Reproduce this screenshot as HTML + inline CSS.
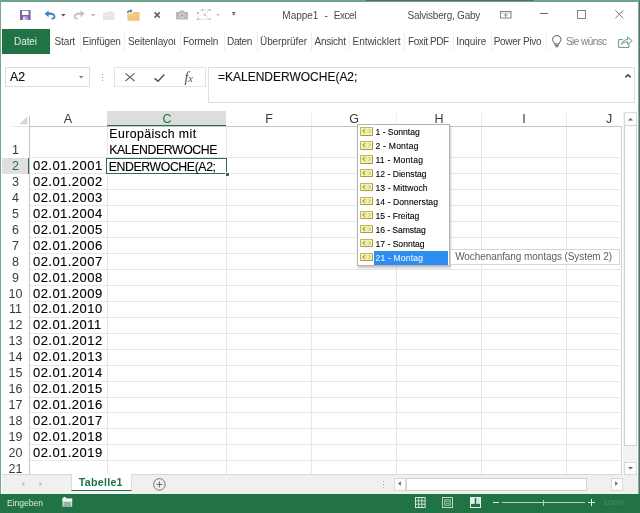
<!DOCTYPE html>
<html>
<head>
<meta charset="utf-8">
<style>
html,body{margin:0;padding:0;}
body{width:640px;height:513px;overflow:hidden;background:#fff;font-family:"Liberation Sans",sans-serif;position:relative;color:#262626;}
.a{position:absolute;}
.t{position:absolute;white-space:nowrap;line-height:1;}
.tab{font-size:10px;top:36.5px;color:#444;}
.sep{position:absolute;top:32px;width:1px;height:19px;background:#efefef;}
.ch{position:absolute;top:112.5px;font-size:12.5px;line-height:13px;color:#3a3a3a;white-space:nowrap;transform:translateX(-50%);}
.vl{position:absolute;top:127px;width:1px;height:347px;background:#e7e7e7;}
.hl{position:absolute;left:30px;width:592px;height:1px;background:#e7e7e7;}
.rn{position:absolute;left:2px;width:27px;text-align:center;font-size:12.5px;line-height:16px;color:#3a3a3a;}
.d{position:absolute;left:33px;font-size:13px;letter-spacing:0.45px;line-height:16px;color:#000;white-space:nowrap;-webkit-text-stroke:0.12px #000;}
.li{position:absolute;left:358px;width:90px;height:14px;}
.ic{position:absolute;left:2.4px;top:1.4px;width:10.6px;height:6.8px;background:#f3ee9f;border:1px solid #a39c4e;border-top-color:#bdb566;border-left-color:#bdb566;border-radius:1.2px;box-shadow:inset 0 0 0 0.8px #f7f4c0;}
.ic:before{content:"";position:absolute;left:1.6px;top:1.6px;width:2.6px;height:2.6px;border-left:1px solid #8c8748;border-bottom:1px solid #8c8748;transform:rotate(45deg) scale(0.8,0.8);}
.ic:after{content:"";position:absolute;right:1.6px;top:1.6px;width:2.6px;height:2.6px;border-right:1px solid #c9c27c;border-top:1px solid #c9c27c;transform:rotate(45deg) scale(0.8,0.8);}
.tx{position:absolute;left:17.5px;top:0;font-size:8.6px;line-height:14px;color:#000;-webkit-text-stroke:0.1px #000;white-space:nowrap;}
svg{position:absolute;overflow:visible;}
#w{position:absolute;left:0;top:0;width:640px;height:513px;overflow:hidden;background:#fff;filter:blur(0.4px);}
</style>
</head>
<body>
<div id="w">
<div class="a" style="left:0;top:0;width:640px;height:1.6px;background:#6fa48a;"></div>
<div class="a" style="left:366px;top:0;width:168px;height:1.4px;background:#5a6b62;"></div>
<div class="a" style="left:0;top:0;width:1.4px;height:513px;background:#7aa38f;"></div>
<div class="a" style="left:637.8px;top:0;width:1.2px;height:513px;background:#8dab9c;"></div>
<div class="a" style="left:639px;top:0;width:1px;height:513px;background:#4d7a64;"></div>
<svg style="left:20px;top:10px;" width="11" height="10" viewBox="0 0 11 10"><rect x="0" y="0" width="10.6" height="10" rx="0.6" fill="#7d5fa8"/><rect x="2" y="0.8" width="6.6" height="4.2" fill="#fff"/><rect x="3" y="6.6" width="4.6" height="3.4" fill="#e6dcf2"/><rect x="5.6" y="7.2" width="1.2" height="2.2" fill="#7d5fa8"/></svg>
<svg style="left:44px;top:10px;" width="13" height="10" viewBox="0 0 13 10"><path d="M0.6 3.8 L4.6 0.4 L4.6 2.6 C9 2.4 11.6 4.6 11.4 7 C11.2 8.8 9.6 9.6 7.6 9.6 L7.6 8 C9 8 9.8 7.4 9.7 6.6 C9.6 5.2 7.8 4.6 4.6 4.9 L4.6 7.2 Z" fill="#3d7cc4"/></svg>
<svg style="left:61px;top:13.5px;" width="5" height="3" viewBox="0 0 5 3"><path d="M0 0 L4.6 0 L2.3 2.6 Z" fill="#555"/></svg>
<svg style="left:73px;top:10px;" width="13" height="10" viewBox="0 0 13 10"><path d="M11.6 3.8 L7.6 0.4 L7.6 2.6 C3.2 2.4 0.6 4.6 0.8 7 C1 8.8 2.6 9.6 4.6 9.6 L4.6 8 C3.2 8 2.4 7.4 2.5 6.6 C2.6 5.2 4.4 4.6 7.6 4.9 L7.6 7.2 Z" fill="#bfc3c7"/></svg>
<svg style="left:90.5px;top:13.5px;" width="5" height="3" viewBox="0 0 5 3"><path d="M0 0 L4.4 0 L2.2 2.4 Z" fill="#b5b5b5"/></svg>
<svg style="left:102.5px;top:11px;" width="12" height="9" viewBox="0 0 12 9"><path d="M0 1.6 L4.2 1.6 L5.2 0.2 L10 0.2 L10 2 L12 2 L11 9 L0 9 Z" fill="#e4e5e6"/><path d="M0.6 4 L11.8 4" stroke="#f3f3f3" stroke-width="0.8"/></svg>
<svg style="left:126.5px;top:9px;" width="13" height="12" viewBox="0 0 13 12"><path d="M0.4 4.4 L5.4 4.4 L6.6 3 L12.6 3 L12.6 11.8 L0.4 11.8 Z" fill="#f2c477"/><path d="M0.4 6.2 L12.6 6.2" stroke="#f7d79c" stroke-width="0.9"/><path d="M0 4 C0 2 1.6 1.2 3.4 1.4 L3.4 0 L5.6 2 L3.4 4 L3.4 2.7 C2.2 2.6 1.4 3 1.3 4 Z" fill="#3a72b8"/></svg>
<svg style="left:154px;top:12.2px;" width="7" height="6" viewBox="0 0 7 6"><path d="M0.6 0.4 L5.8 5.6 M5.8 0.4 L0.6 5.6" stroke="#666" stroke-width="1.7" fill="none"/></svg>
<svg style="left:176px;top:10px;" width="12" height="9.5" viewBox="0 0 12 9.5"><path d="M0 2 L3.4 2 L4.4 0.4 L7.8 0.4 L8.8 2 L12 2 L12 9.4 L0 9.4 Z" fill="#b9b9b9"/><circle cx="6" cy="5.6" r="2.7" fill="#d8d8d8"/><circle cx="6" cy="5.6" r="1.5" fill="#a8a8a8"/></svg>
<svg style="left:197px;top:9px;" width="14" height="11" viewBox="0 0 14 11"><path d="M1 3.8 L5.6 0.8 L13 0.8 L7.6 5.6 L13 10.2 L1 10.2 Z" fill="none" stroke="#c2c2c2" stroke-width="0.9" stroke-dasharray="1.4 1.2"/><rect x="4.6" y="0" width="2" height="1.8" fill="#b9c9b9"/><rect x="11.8" y="0" width="2" height="1.8" fill="#b9c9b9"/><rect x="0" y="3" width="2" height="1.8" fill="#c4b9c9"/><rect x="0" y="9.3" width="2" height="1.8" fill="#c2c2c2"/><rect x="11.8" y="9.3" width="2" height="1.8" fill="#c2c2c2"/><rect x="6.6" y="4.8" width="2" height="1.8" fill="#c2c2c2"/></svg>
<svg style="left:216px;top:13.5px;" width="4" height="3" viewBox="0 0 4 3"><path d="M0 0 L4 0 L2 2.2 Z" fill="#c4c4c4"/></svg>
<svg style="left:232.3px;top:12.4px;" width="4" height="4" viewBox="0 0 4 4"><rect x="0.2" y="0" width="3.2" height="0.9" fill="#555"/><path d="M0 1.6 L3.6 1.6 L1.8 3.6 Z" fill="#555"/></svg>
<div class="t" style="left:282.3px;top:10.5px;font-size:10px;color:#4a4a4a;">Mappe1</div>
<div class="t" style="left:324.6px;top:10.5px;font-size:10px;color:#4a4a4a;">-</div>
<div class="t" style="left:333.8px;top:10.5px;font-size:10px;letter-spacing:-0.45px;color:#4a4a4a;">Excel</div>
<div class="t" style="left:407.5px;top:10.5px;font-size:10px;letter-spacing:-0.22px;color:#4a4a4a;">Salvisberg, Gaby</div>
<svg style="left:500px;top:11px;" width="11.5" height="7.5" viewBox="0 0 11.5 7.5"><rect x="0.4" y="0.4" width="10.6" height="6.6" fill="none" stroke="#777" stroke-width="0.9"/><path d="M0.4 2 L11 2" stroke="#999" stroke-width="0.6"/><path d="M5.7 6.4 L5.7 3 M4 4.6 L5.7 2.9 L7.4 4.6" stroke="#777" stroke-width="0.9" fill="none"/></svg>
<div class="a" style="left:540px;top:12.6px;width:8px;height:1px;background:#666;"></div>
<div class="a" style="left:577px;top:9.7px;width:7px;height:7px;border:1px solid #858585;"></div>
<svg style="left:615.4px;top:9.7px;" width="9" height="9" viewBox="0 0 9 9"><path d="M0.3 0.3 L8.3 8.3 M8.3 0.3 L0.3 8.3" stroke="#7a7a7a" stroke-width="1" fill="none"/></svg>
<div class="a" style="left:1.7px;top:29px;width:48.5px;height:24.7px;background:#217346;"></div>
<div class="t tab" style="left:14px;letter-spacing:-0.07px;color:#dff0e6;">Datei</div>
<div class="t tab" style="left:54.5px;letter-spacing:-0.12px;">Start</div>
<div class="t tab" style="left:82.5px;letter-spacing:-0.15px;">Einfügen</div>
<div class="t tab" style="left:128px;letter-spacing:-0.13px;">Seitenlayoι</div>
<div class="t tab" style="left:183px;letter-spacing:-0.24px;">Formeln</div>
<div class="t tab" style="left:227px;letter-spacing:-0.33px;">Daten</div>
<div class="t tab" style="left:260px;letter-spacing:-0.08px;">Überprüfer</div>
<div class="t tab" style="left:314.5px;letter-spacing:-0.22px;">Ansicht</div>
<div class="t tab" style="left:352.5px;letter-spacing:-0.03px;">Entwicklert</div>
<div class="t tab" style="left:408px;letter-spacing:-0.41px;">Foxit PDF</div>
<div class="t tab" style="left:456.2px;letter-spacing:-0.08px;">Inquire</div>
<div class="t tab" style="left:493.7px;letter-spacing:-0.3px;">Power Pivo</div>
<div class="t tab" style="left:566px;letter-spacing:-0.56px;color:#808080;">Sie wünsc</div>
<div class="sep" style="left:80px;"></div>
<div class="sep" style="left:124px;"></div>
<div class="sep" style="left:180px;"></div>
<div class="sep" style="left:223.5px;"></div>
<div class="sep" style="left:256.5px;"></div>
<div class="sep" style="left:311px;"></div>
<div class="sep" style="left:348.5px;"></div>
<div class="sep" style="left:403.5px;"></div>
<div class="sep" style="left:452.5px;"></div>
<div class="sep" style="left:490.5px;"></div>
<div class="sep" style="left:546px;"></div>
<svg style="left:552px;top:34.5px;" width="10" height="13" viewBox="0 0 10 13"><path d="M4.8 0.6 C7.4 0.6 9 2.4 9 4.6 C9 6.4 7.4 7.2 7 9 L2.6 9 C2.2 7.2 0.6 6.4 0.6 4.6 C0.6 2.4 2.2 0.6 4.8 0.6 Z" fill="none" stroke="#555" stroke-width="1"/><path d="M2.8 10.4 L6.8 10.4 M3.4 11.8 L6.2 11.8" stroke="#555" stroke-width="0.9"/></svg>
<svg style="left:617.5px;top:35.6px;" width="15" height="12" viewBox="0 0 15 12"><path d="M5 3.6 L0.6 3.6 L0.6 11.4 L11 11.4 L11 8.4" fill="none" stroke="#6f9480" stroke-width="1"/><path d="M3.6 8.6 C4 5.4 6.4 3.6 9.6 3.6 L9.6 1 L14.2 4.8 L9.6 8.4 L9.6 5.8 C7 5.8 5 6.6 3.6 8.6 Z" fill="#fff" stroke="#6f9480" stroke-width="1" stroke-linejoin="round"/></svg>
<div class="a" style="left:5px;top:66.5px;width:83px;height:18px;border:1px solid #dedede;"></div>
<div class="t" style="left:10px;top:70.5px;font-size:12.3px;color:#111;-webkit-text-stroke:0.15px #111;">A2</div>
<svg style="left:79.3px;top:75.6px;" width="5" height="3" viewBox="0 0 5 3"><path d="M0 0 L4.4 0 L2.2 2.4 Z" fill="#777"/></svg>
<div class="a" style="left:101.6px;top:73.6px;width:1.6px;height:1.6px;background:#a0a0a0;"></div>
<div class="a" style="left:101.6px;top:76.6px;width:1.6px;height:1.6px;background:#a0a0a0;"></div>
<div class="a" style="left:101.6px;top:79.6px;width:1.6px;height:1.6px;background:#a0a0a0;"></div>
<div class="a" style="left:114px;top:67px;width:89.5px;height:17.5px;border:1px solid #e4e4e4;"></div>
<svg style="left:124.5px;top:73px;" width="10" height="8.6" viewBox="0 0 10 8.6"><path d="M0.5 0.4 L9.5 8 M9.5 0.4 L0.5 8" stroke="#666" stroke-width="1.2" fill="none"/></svg>
<svg style="left:154px;top:73.6px;" width="11" height="8" viewBox="0 0 11 8"><path d="M0.6 4.4 L4 7.2 L10.4 0.6" stroke="#555" stroke-width="1.5" fill="none"/></svg>
<div class="t" style="left:184.5px;top:69.5px;font-family:'Liberation Serif',serif;font-style:italic;font-size:14.5px;color:#555;">f<span style="font-size:10.5px;position:relative;top:0.5px;left:-0.3px;">x</span></div>
<div class="a" style="left:207.5px;top:66.5px;width:425px;height:34.6px;border:1px solid #dedede;"></div>
<div class="t" style="left:217.5px;top:70.6px;font-size:12.8px;transform-origin:0 0;transform:scaleX(0.937);color:#111;-webkit-text-stroke:0.15px #111;">=KALENDERWOCHE(A2;</div>
<svg style="left:624.6px;top:74.3px;" width="6" height="4" viewBox="0 0 6 4"><path d="M0.4 3.4 L3 0.8 L5.6 3.4" stroke="#444" stroke-width="1.5" fill="none"/></svg>
<div class="a" style="left:107px;top:111px;width:119px;height:13.8px;background:#dddddd;border-bottom:1.7px solid #217346;"></div>
<div class="a" style="left:2px;top:158px;width:26.2px;height:16px;background:#dfdfdf;border-right:1.6px solid #217346;"></div>
<svg style="left:17.5px;top:115.5px;" width="10" height="8.5" viewBox="0 0 10 8.5"><path d="M9.4 0.6 L9.4 8.2 L1.2 8.2 Z" fill="#d6d6d6"/></svg>
<div class="ch" style="left:68px;">A</div>
<div class="ch" style="left:167px;color:#217346;">C</div>
<div class="ch" style="left:269px;">F</div>
<div class="ch" style="left:354px;">G</div>
<div class="ch" style="left:439px;">H</div>
<div class="ch" style="left:524px;">I</div>
<div class="ch" style="left:609px;">J</div>
<div class="a" style="left:12px;top:126px;width:17px;height:1px;background:#e6e6e6;"></div>
<div class="a" style="left:29px;top:126px;width:593px;height:1px;background:#c6c6c6;"></div>
<div class="a" style="left:29px;top:116px;width:1px;height:358px;background:#c6c6c6;"></div>
<div class="a" style="left:621.2px;top:126px;width:1px;height:348px;background:#d0d0d0;"></div>
<div class="vl" style="left:106.5px;"></div>
<div class="vl" style="left:226px;"></div>
<div class="vl" style="left:311.3px;"></div>
<div class="a" style="left:311.3px;top:113px;width:1px;height:13px;background:#ededed;"></div>
<div class="vl" style="left:396.3px;"></div>
<div class="a" style="left:396.3px;top:113px;width:1px;height:13px;background:#ededed;"></div>
<div class="vl" style="left:481.3px;"></div>
<div class="a" style="left:481.3px;top:113px;width:1px;height:13px;background:#ededed;"></div>
<div class="vl" style="left:566.3px;"></div>
<div class="a" style="left:566.3px;top:113px;width:1px;height:13px;background:#ededed;"></div>
<div class="hl" style="top:157.40px;"></div>
<div class="hl" style="top:173.34px;"></div>
<div class="hl" style="top:189.28px;"></div>
<div class="hl" style="top:205.22px;"></div>
<div class="hl" style="top:221.16px;"></div>
<div class="hl" style="top:237.10px;"></div>
<div class="hl" style="top:253.04px;"></div>
<div class="hl" style="top:268.98px;"></div>
<div class="hl" style="top:284.92px;"></div>
<div class="hl" style="top:300.86px;"></div>
<div class="hl" style="top:316.80px;"></div>
<div class="hl" style="top:332.74px;"></div>
<div class="hl" style="top:348.68px;"></div>
<div class="hl" style="top:364.62px;"></div>
<div class="hl" style="top:380.56px;"></div>
<div class="hl" style="top:396.50px;"></div>
<div class="hl" style="top:412.44px;"></div>
<div class="hl" style="top:428.38px;"></div>
<div class="hl" style="top:444.32px;"></div>
<div class="hl" style="top:460.26px;"></div>
<div class="rn" style="top:142px;">1</div>
<div class="rn" style="top:158.00px;color:#217346;">2</div>
<div class="d" style="top:158.00px;">02.01.2001</div>
<div class="rn" style="top:173.94px;">3</div>
<div class="d" style="top:173.94px;">02.01.2002</div>
<div class="rn" style="top:189.88px;">4</div>
<div class="d" style="top:189.88px;">02.01.2003</div>
<div class="rn" style="top:205.82px;">5</div>
<div class="d" style="top:205.82px;">02.01.2004</div>
<div class="rn" style="top:221.76px;">6</div>
<div class="d" style="top:221.76px;">02.01.2005</div>
<div class="rn" style="top:237.70px;">7</div>
<div class="d" style="top:237.70px;">02.01.2006</div>
<div class="rn" style="top:253.64px;">8</div>
<div class="d" style="top:253.64px;">02.01.2007</div>
<div class="rn" style="top:269.58px;">9</div>
<div class="d" style="top:269.58px;">02.01.2008</div>
<div class="rn" style="top:285.52px;">10</div>
<div class="d" style="top:285.52px;">02.01.2009</div>
<div class="rn" style="top:301.46px;">11</div>
<div class="d" style="top:301.46px;">02.01.2010</div>
<div class="rn" style="top:317.40px;">12</div>
<div class="d" style="top:317.40px;">02.01.2011</div>
<div class="rn" style="top:333.34px;">13</div>
<div class="d" style="top:333.34px;">02.01.2012</div>
<div class="rn" style="top:349.28px;">14</div>
<div class="d" style="top:349.28px;">02.01.2013</div>
<div class="rn" style="top:365.22px;">15</div>
<div class="d" style="top:365.22px;">02.01.2014</div>
<div class="rn" style="top:381.16px;">16</div>
<div class="d" style="top:381.16px;">02.01.2015</div>
<div class="rn" style="top:397.10px;">17</div>
<div class="d" style="top:397.10px;">02.01.2016</div>
<div class="rn" style="top:413.04px;">18</div>
<div class="d" style="top:413.04px;">02.01.2017</div>
<div class="rn" style="top:428.98px;">19</div>
<div class="d" style="top:428.98px;">02.01.2018</div>
<div class="rn" style="top:444.92px;">20</div>
<div class="d" style="top:444.92px;">02.01.2019</div>
<div class="rn" style="top:460.86px;">21</div>
<div class="t" style="left:109.3px;top:128.3px;font-size:12.3px;color:#000;-webkit-text-stroke:0.12px #000;letter-spacing:0.42px;">Europäisch mit</div>
<div class="t" style="left:109.3px;top:144.2px;font-size:12.3px;color:#000;-webkit-text-stroke:0.12px #000;letter-spacing:-0.42px;">KALENDERWOCHE</div>
<div class="a" style="left:106px;top:157.6px;width:118.5px;height:14.4px;border:1.5px solid #217346;background:#fff;"></div>
<div class="a" style="left:224.6px;top:172px;width:3.2px;height:3.2px;background:#217346;border:0.8px solid #fff;"></div>
<div class="t" style="left:108.7px;top:160.5px;font-size:12.3px;color:#000;-webkit-text-stroke:0.12px #000;letter-spacing:-0.4px;">ENDERWOCHE(A2;</div>
<div class="a" style="left:2px;top:474px;width:635.5px;height:20px;background:#f0f0f0;"></div>
<div class="a" style="left:2px;top:473.7px;width:620px;height:1px;background:#d8d8d8;"></div>
<div class="a" style="left:357.3px;top:123.6px;width:90.6px;height:140.4px;background:#fff;border:1px solid #b4b4b4;box-shadow:1px 1.5px 2px rgba(0,0,0,0.22);"></div>
<div class="li" style="top:125.4px;"><div class="ic"></div><div class="tx" style="letter-spacing:-0.02px;">1 - Sonntag</div></div>
<div class="li" style="top:139.37px;"><div class="ic"></div><div class="tx" style="letter-spacing:0.21px;">2 - Montag</div></div>
<div class="li" style="top:153.34px;"><div class="ic"></div><div class="tx" style="letter-spacing:0.22px;">11 - Montag</div></div>
<div class="li" style="top:167.31px;"><div class="ic"></div><div class="tx" style="letter-spacing:0px;">12 - Dienstag</div></div>
<div class="li" style="top:181.28px;"><div class="ic"></div><div class="tx" style="letter-spacing:0.08px;">13 - Mittwoch</div></div>
<div class="li" style="top:195.25px;"><div class="ic"></div><div class="tx" style="letter-spacing:0.06px;">14 - Donnerstag</div></div>
<div class="li" style="top:209.22000000000003px;"><div class="ic"></div><div class="tx" style="letter-spacing:-0.01px;">15 - Freitag</div></div>
<div class="li" style="top:223.19px;"><div class="ic"></div><div class="tx" style="letter-spacing:-0.07px;">16 - Samstag</div></div>
<div class="li" style="top:237.16000000000003px;"><div class="ic"></div><div class="tx" style="letter-spacing:-0.01px;">17 - Sonntag</div></div>
<div class="a" style="left:374px;top:250.8px;width:74px;height:13.8px;background:#2e8df0;"></div>
<div class="li" style="top:251.13px;"><div class="ic"></div><div class="tx" style="color:#e4f1ff;-webkit-text-stroke:0.1px #e4f1ff;letter-spacing:0.17px;">21 - Montag</div></div>
<div class="a" style="left:450px;top:248.5px;width:168px;height:14.5px;background:#fff;border:1px solid #d6d6d6;"></div>
<div class="t" style="left:455.2px;top:251.5px;font-size:10px;letter-spacing:-0.08px;color:#606060;">Wochenanfang montags (System 2)</div>
<div class="a" style="left:623px;top:111.5px;width:14px;height:363px;background:#f2f2f2;"></div>
<div class="a" style="left:624px;top:112px;width:10.6px;height:11.8px;background:#fdfdfd;border:1px solid #dadada;"></div>
<svg style="left:627.5px;top:118.3px;" width="5" height="2.6" viewBox="0 0 5 2.6"><path d="M0 2.6 L2.5 0 L5 2.6 Z" fill="#666"/></svg>
<div class="a" style="left:624px;top:125px;width:10.6px;height:319px;background:#fff;border:1px solid #d2d2d2;"></div>
<div class="a" style="left:624px;top:462.3px;width:10.6px;height:11px;background:#fdfdfd;border:1px solid #dadada;"></div>
<svg style="left:627.5px;top:467px;" width="5" height="2.6" viewBox="0 0 5 2.6"><path d="M0 0 L2.5 2.6 L5 0 Z" fill="#666"/></svg>
<svg style="left:20.5px;top:481px;" width="4" height="6" viewBox="0 0 4 6"><path d="M3.4 0 L3.4 5.6 L0.4 2.8 Z" fill="#c9c9c9"/></svg>
<svg style="left:38.5px;top:481px;" width="4" height="6" viewBox="0 0 4 6"><path d="M0.4 0 L0.4 5.6 L3.4 2.8 Z" fill="#c9c9c9"/></svg>
<div class="a" style="left:70.8px;top:474.3px;width:59px;height:16px;background:#fff;border-bottom:1.6px solid #217346;border-left:1px solid #dcdcdc;border-right:1px solid #dcdcdc;"></div>
<div class="t" style="left:78.8px;top:477px;font-size:10.7px;letter-spacing:0.25px;font-weight:bold;color:#217346;">Tabelle1</div>
<svg style="left:153px;top:478px;" width="13" height="13" viewBox="0 0 13 13"><circle cx="6.4" cy="6.4" r="5.8" fill="none" stroke="#6a6a6a" stroke-width="0.9"/><path d="M3.4 6.4 L9.4 6.4 M6.4 3.4 L6.4 9.4" stroke="#6a6a6a" stroke-width="1"/></svg>
<div class="a" style="left:382.7px;top:480.5px;width:1.4px;height:1.4px;background:#a9a9a9;"></div>
<div class="a" style="left:382.7px;top:483.5px;width:1.4px;height:1.4px;background:#a9a9a9;"></div>
<div class="a" style="left:382.7px;top:486.5px;width:1.4px;height:1.4px;background:#a9a9a9;"></div>
<div class="a" style="left:394px;top:477.5px;width:10px;height:11.8px;background:#fdfdfd;border:1px solid #dadada;"></div>
<svg style="left:397.6px;top:481.2px;" width="3" height="5" viewBox="0 0 3 5"><path d="M2.8 0 L2.8 5 L0.2 2.5 Z" fill="#666"/></svg>
<div class="a" style="left:406.2px;top:477.5px;width:179px;height:11.8px;background:#fff;border:1px solid #d2d2d2;"></div>
<div class="a" style="left:611.3px;top:477.5px;width:10px;height:11.8px;background:#fdfdfd;border:1px solid #dadada;"></div>
<svg style="left:615.4px;top:481.2px;" width="3" height="5" viewBox="0 0 3 5"><path d="M0.2 0 L0.2 5 L2.8 2.5 Z" fill="#666"/></svg>
<div class="a" style="left:0;top:493.5px;width:640px;height:19.5px;background:#217346;"></div>
<div class="t" style="left:7px;top:499.3px;font-size:8.5px;color:#dcebe2;">Eingeben</div>
<svg style="left:62px;top:497.2px;" width="11" height="10" viewBox="0 0 11 10"><rect x="0.4" y="1.6" width="9.8" height="8" fill="#cfe3d7"/><rect x="0.4" y="1.6" width="9.8" height="2.2" fill="#f2f8f4"/><path d="M1.6 6 L9 6 M1.6 8 L9 8" stroke="#2f7a53" stroke-width="0.8"/><rect x="1.4" y="0" width="2.4" height="2.2" fill="#f2f8f4"/></svg>
<svg style="left:414.5px;top:497.3px;" width="11" height="11" viewBox="0 0 11 11"><rect x="0.5" y="0.5" width="9.6" height="10" fill="none" stroke="#d4e6db" stroke-width="1"/><path d="M3.7 0.5 L3.7 10.5 M6.9 0.5 L6.9 10.5 M0.5 3.8 L10.1 3.8 M0.5 7.2 L10.1 7.2" stroke="#d4e6db" stroke-width="0.9"/></svg>
<svg style="left:442px;top:497.3px;" width="11" height="11" viewBox="0 0 11 11"><rect x="0.5" y="0.5" width="10" height="10" fill="none" stroke="#bcd7c7" stroke-width="1"/><rect x="2.8" y="2.8" width="5.4" height="5.4" fill="none" stroke="#bcd7c7" stroke-width="0.9"/><path d="M3.8 4.6 L7.2 4.6 M3.8 6.4 L7.2 6.4" stroke="#bcd7c7" stroke-width="0.7"/></svg>
<svg style="left:469.5px;top:497.3px;" width="11" height="11" viewBox="0 0 11 11"><rect x="0.5" y="0.5" width="10" height="10" fill="none" stroke="#e6f1ea" stroke-width="1"/><rect x="0.5" y="0.5" width="4.2" height="6.4" fill="#e6f1ea"/><rect x="6.2" y="0.5" width="4.3" height="6.4" fill="#e6f1ea" opacity="0.9"/></svg>
<div class="a" style="left:493px;top:501.8px;width:6px;height:1.5px;background:#e6f1ea;"></div>
<div class="a" style="left:502px;top:502.2px;width:83px;height:1px;background:#b7d3c3;"></div>
<div class="a" style="left:543px;top:500px;width:1px;height:5.5px;background:#b7d3c3;"></div>
<div class="a" style="left:588px;top:501.8px;width:7px;height:1.5px;background:#e6f1ea;"></div>
<div class="a" style="left:590.8px;top:499px;width:1.5px;height:7px;background:#e6f1ea;"></div>
<div class="t" style="left:603.5px;top:498.5px;font-size:8px;color:#4c8d69;">100%</div>
</div>
</body>
</html>
